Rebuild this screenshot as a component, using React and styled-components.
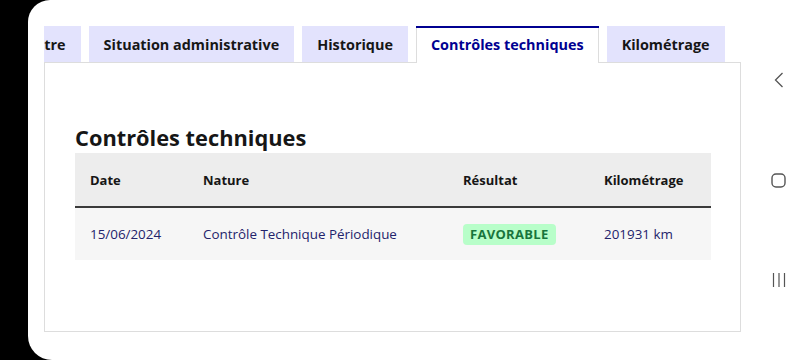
import React, { useLayoutEffect, useRef } from 'react';
import styled, { createGlobalStyle } from 'styled-components';

const GlobalStyle = createGlobalStyle`
  html, body {
    margin: 0;
    padding: 0;
    background: #000;
  }
  body {
    font-family: "Open Sans", "Liberation Sans", sans-serif;
    color: #161616;
  }
`;

const Device = styled.div`
  display: flex;
  width: 800px;
  height: 360px;
  overflow: hidden;
  background: #000;
`;

const Screen = styled.div`
  flex: 1;
  display: flex;
  margin-left: 28px;
  background: #fff;
  border-radius: 22px 0 0 24px;
  overflow: hidden;
`;

const Page = styled.main`
  flex: 1;
  min-width: 0;
  padding: 26px 16px 0 16px;
  display: flex;
  flex-direction: column;
`;

const TabStrip = styled.div`
  position: relative;
  overflow: hidden;
  flex-shrink: 0;
  box-shadow: inset 0 -1px 0 #ddd;
`;

const TabRow = styled.div`
  display: flex;
  gap: 8px;
  width: max-content;
  padding-right: 16px;
`;

const Tab = styled.button`
  flex-shrink: 0;
  height: 37px;
  padding: 0 15px;
  border: none;
  border-radius: 0;
  font-family: inherit;
  font-size: 14.4px;
  font-weight: 700;
  white-space: nowrap;
  cursor: pointer;
  color: ${p => (p.$active ? '#000091' : '#161616')};
  background: ${p => (p.$active ? '#fff' : '#e3e3fd')};
  box-shadow: ${p =>
    p.$active
      ? 'inset 0 2px 0 #000091, inset 1px 0 0 #ddd, inset -1px 0 0 #ddd'
      : 'inset 0 -1px 0 #ddd'};
`;

const Panel = styled.section`
  flex: 0 0 269px;
  box-sizing: border-box;
  border: 1px solid #ddd;
  border-top: none;
  padding: 60px 29px 0 30px;
`;

const Title = styled.h3`
  margin: 0 0 1px;
  font-size: 21.8px;
  line-height: 29px;
  font-weight: 700;
  color: #161616;
`;

const Table = styled.div`
  display: grid;
  grid-template-columns: 113px 260px 141px 1fr;
`;

const HeadCell = styled.div`
  background: #ededed;
  border-bottom: 2px solid #3a3a3a;
  padding: 0 15px;
  height: 53px;
  display: flex;
  align-items: center;
  font-size: 13px;
  font-weight: 700;
  color: #161616;
`;

const Cell = styled.div`
  background: #f6f6f6;
  padding: 0 15px;
  height: 52px;
  display: flex;
  align-items: center;
  font-size: 13.4px;
  color: #23236b;
  white-space: nowrap;
`;

const Badge = styled.span`
  display: inline-block;
  background: #b8fec9;
  color: #18753c;
  font-size: 13px;
  font-weight: 700;
  letter-spacing: 0.3px;
  text-transform: uppercase;
  padding: 1px 7px;
  line-height: 19px;
  border-radius: 4px;
`;

const NavBar = styled.nav`
  width: 43px;
  display: flex;
  flex-direction: column;
  align-items: center;
  justify-content: center;
  gap: 80px;
  color: #555;
`;

const NavButton = styled.div`
  width: 20px;
  height: 20px;
  display: flex;
  align-items: center;
  justify-content: center;
`;

const tabs = [
  'Véhicule',
  'Titulaire & titre',
  'Situation administrative',
  'Historique',
  'Contrôles techniques',
  'Kilométrage',
];

const App = () => {
  const stripRef = useRef(null);
  const firstFull = useRef(null);

  useLayoutEffect(() => {
    if (stripRef.current && firstFull.current) {
      stripRef.current.scrollLeft = firstFull.current.offsetLeft - 44;
    }
  }, []);

  return (
    <>
      <GlobalStyle />
      <Device>
        <Screen>
          <Page>
            <TabStrip ref={stripRef}>
              <TabRow>
                {tabs.map((t, i) => (
                  <Tab
                    key={t}
                    ref={i === 2 ? firstFull : null}
                    $active={t === 'Contrôles techniques'}
                  >
                    {t}
                  </Tab>
                ))}
              </TabRow>
            </TabStrip>
            <Panel>
              <Title>Contrôles techniques</Title>
              <Table>
                <HeadCell>Date</HeadCell>
                <HeadCell>Nature</HeadCell>
                <HeadCell>Résultat</HeadCell>
                <HeadCell>Kilométrage</HeadCell>
                <Cell>15/06/2024</Cell>
                <Cell>Contrôle Technique Périodique</Cell>
                <Cell>
                  <Badge>Favorable</Badge>
                </Cell>
                <Cell>201931 km</Cell>
              </Table>
            </Panel>
          </Page>
          <NavBar>
            <NavButton>
              <svg width="10" height="16" viewBox="0 0 10 16" fill="none" stroke="currentColor" strokeWidth="1.3">
                <path d="M8.5 1 L1.5 8 L8.5 15" />
              </svg>
            </NavButton>
            <NavButton>
              <svg width="15" height="15" viewBox="0 0 15 15" fill="none" stroke="currentColor" strokeWidth="1.4">
                <rect x="1" y="1" width="13" height="13" rx="4" />
              </svg>
            </NavButton>
            <NavButton>
              <svg width="14" height="16" viewBox="0 0 14 16" fill="none" stroke="currentColor" strokeWidth="1.2">
                <path d="M1.5 1 V15 M7 1 V15 M12.5 1 V15" />
              </svg>
            </NavButton>
          </NavBar>
        </Screen>
      </Device>
    </>
  );
};

export default App;
